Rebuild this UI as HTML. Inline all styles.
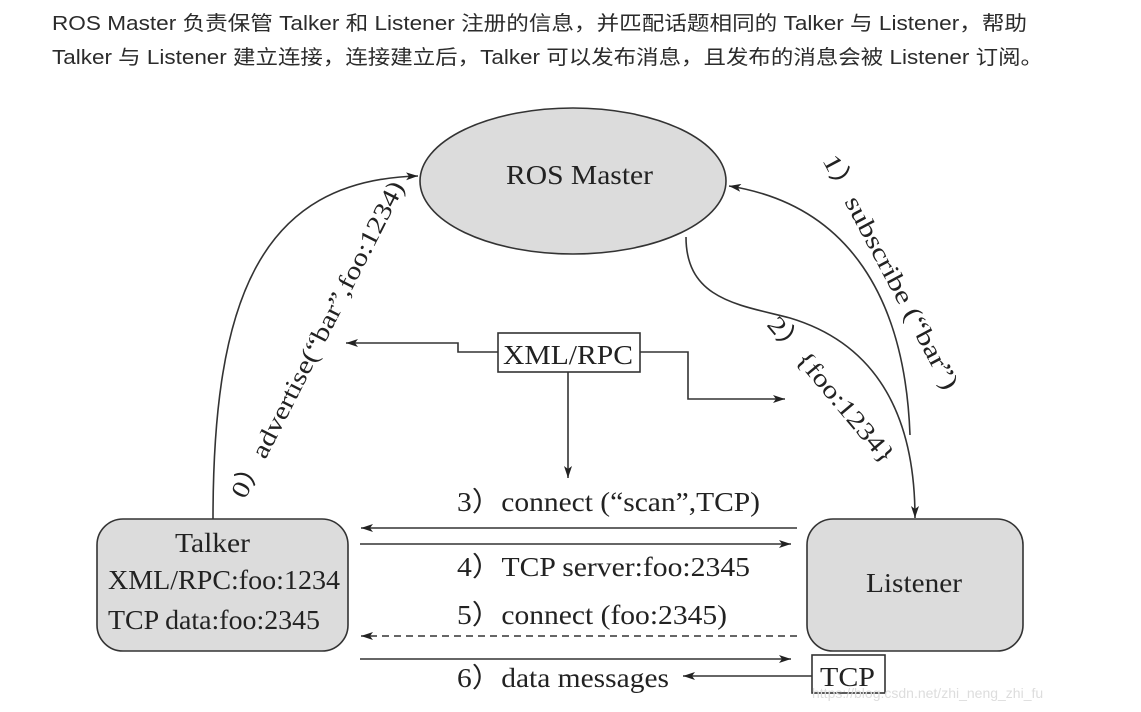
<!DOCTYPE html>
<html><head><meta charset="utf-8"><style>
html,body{margin:0;padding:0;background:#fff;width:1141px;height:712px;overflow:hidden}
svg{position:absolute;left:0;top:0}
</style></head><body>
<svg width="1141" height="712" viewBox="0 0 1141 712" font-family="Liberation Serif,serif" fill="#222">
<defs>
<marker id="a" viewBox="0 0 12 8" refX="12" refY="4" markerWidth="12" markerHeight="8" markerUnits="userSpaceOnUse" orient="auto"><path d="M0,0 L12,4 L0,8 L3,4 Z" fill="#222"/></marker>
</defs>
<g font-family="Liberation Sans,Noto Sans CJK SC,sans-serif" font-size="20" fill="#2b2b2b">
<text x="52" y="30" textLength="975" lengthAdjust="spacingAndGlyphs">ROS Master 负责保管 Talker 和 Listener 注册的信息，并匹配话题相同的 Talker 与 Listener，帮助</text>
<text x="52" y="64" textLength="991" lengthAdjust="spacingAndGlyphs">Talker 与 Listener 建立连接，连接建立后，Talker 可以发布消息，且发布的消息会被 Listener 订阅。</text>
</g>
<g stroke="#333" stroke-width="1.6" fill="none">
<ellipse cx="573" cy="181" rx="153" ry="73" fill="#dcdcdc"/>
<rect x="97" y="519" width="251" height="132" rx="26" fill="#dcdcdc"/>
<rect x="807" y="519" width="216" height="132" rx="26" fill="#dcdcdc"/>
<rect x="498" y="333" width="142" height="39" fill="#fff"/>
<rect x="812" y="655" width="73" height="38" fill="#fff"/>
<path d="M213,519 C213,300 260,180 418,176" marker-end="url(#a)"/>
<path d="M910,435 C905,300 850,205 729,186" marker-end="url(#a)"/>
<path d="M686,237 C686,300 740,305 790,318 C880,345 915,420 915,518" marker-end="url(#a)"/>
<path d="M498,352 H458 V343 H346" marker-end="url(#a)"/>
<path d="M640,352 H688 V399 H785" marker-end="url(#a)"/>
<path d="M568,372 V478" marker-end="url(#a)"/>
<path d="M797,528 H361" marker-end="url(#a)"/>
<path d="M360,544 H791" marker-end="url(#a)"/>
<path d="M797,636 H361" stroke-dasharray="7,5" marker-end="url(#a)"/>
<path d="M360,659 H791" marker-end="url(#a)"/>
<path d="M812,676 H683" marker-end="url(#a)"/>
</g>
<text x="506" y="184" font-size="27" textLength="147" lengthAdjust="spacingAndGlyphs">ROS Master</text>
<text x="175" y="552" font-size="27" textLength="75" lengthAdjust="spacingAndGlyphs">Talker</text>
<text x="108" y="589" font-size="27" textLength="232" lengthAdjust="spacingAndGlyphs">XML/RPC:foo:1234</text>
<text x="108" y="629" font-size="27" textLength="212" lengthAdjust="spacingAndGlyphs">TCP data:foo:2345</text>
<text x="866" y="592" font-size="27" textLength="96" lengthAdjust="spacingAndGlyphs">Listener</text>
<text x="503" y="364" font-size="27" textLength="130" lengthAdjust="spacingAndGlyphs">XML/RPC</text>
<text x="820" y="686" font-size="27" textLength="55" lengthAdjust="spacingAndGlyphs">TCP</text>
<text x="457" y="511" font-size="27" textLength="303" lengthAdjust="spacingAndGlyphs">3）connect (“scan”,TCP)</text>
<text x="457" y="576" font-size="27" textLength="293" lengthAdjust="spacingAndGlyphs">4）TCP server:foo:2345</text>
<text x="457" y="624" font-size="27" textLength="270" lengthAdjust="spacingAndGlyphs">5）connect (foo:2345)</text>
<text x="457" y="687" font-size="27" textLength="212" lengthAdjust="spacingAndGlyphs">6）data messages</text>
<text transform="translate(245,500) rotate(-63)" font-size="25" textLength="352" lengthAdjust="spacingAndGlyphs">0）advertise(“bar”,foo:1234)</text>
<text transform="translate(822,160) rotate(62)" font-size="25" textLength="262" lengthAdjust="spacingAndGlyphs">1）subscribe (“bar”)</text>
<text transform="translate(766,325) rotate(50)" font-size="25" textLength="183" lengthAdjust="spacingAndGlyphs">2）{foo:1234}</text>
<text x="812" y="698" font-size="14" fill="#ddd" font-family="Liberation Sans,sans-serif">https://blog.csdn.net/zhi_neng_zhi_fu</text>
</svg>
</body></html>
